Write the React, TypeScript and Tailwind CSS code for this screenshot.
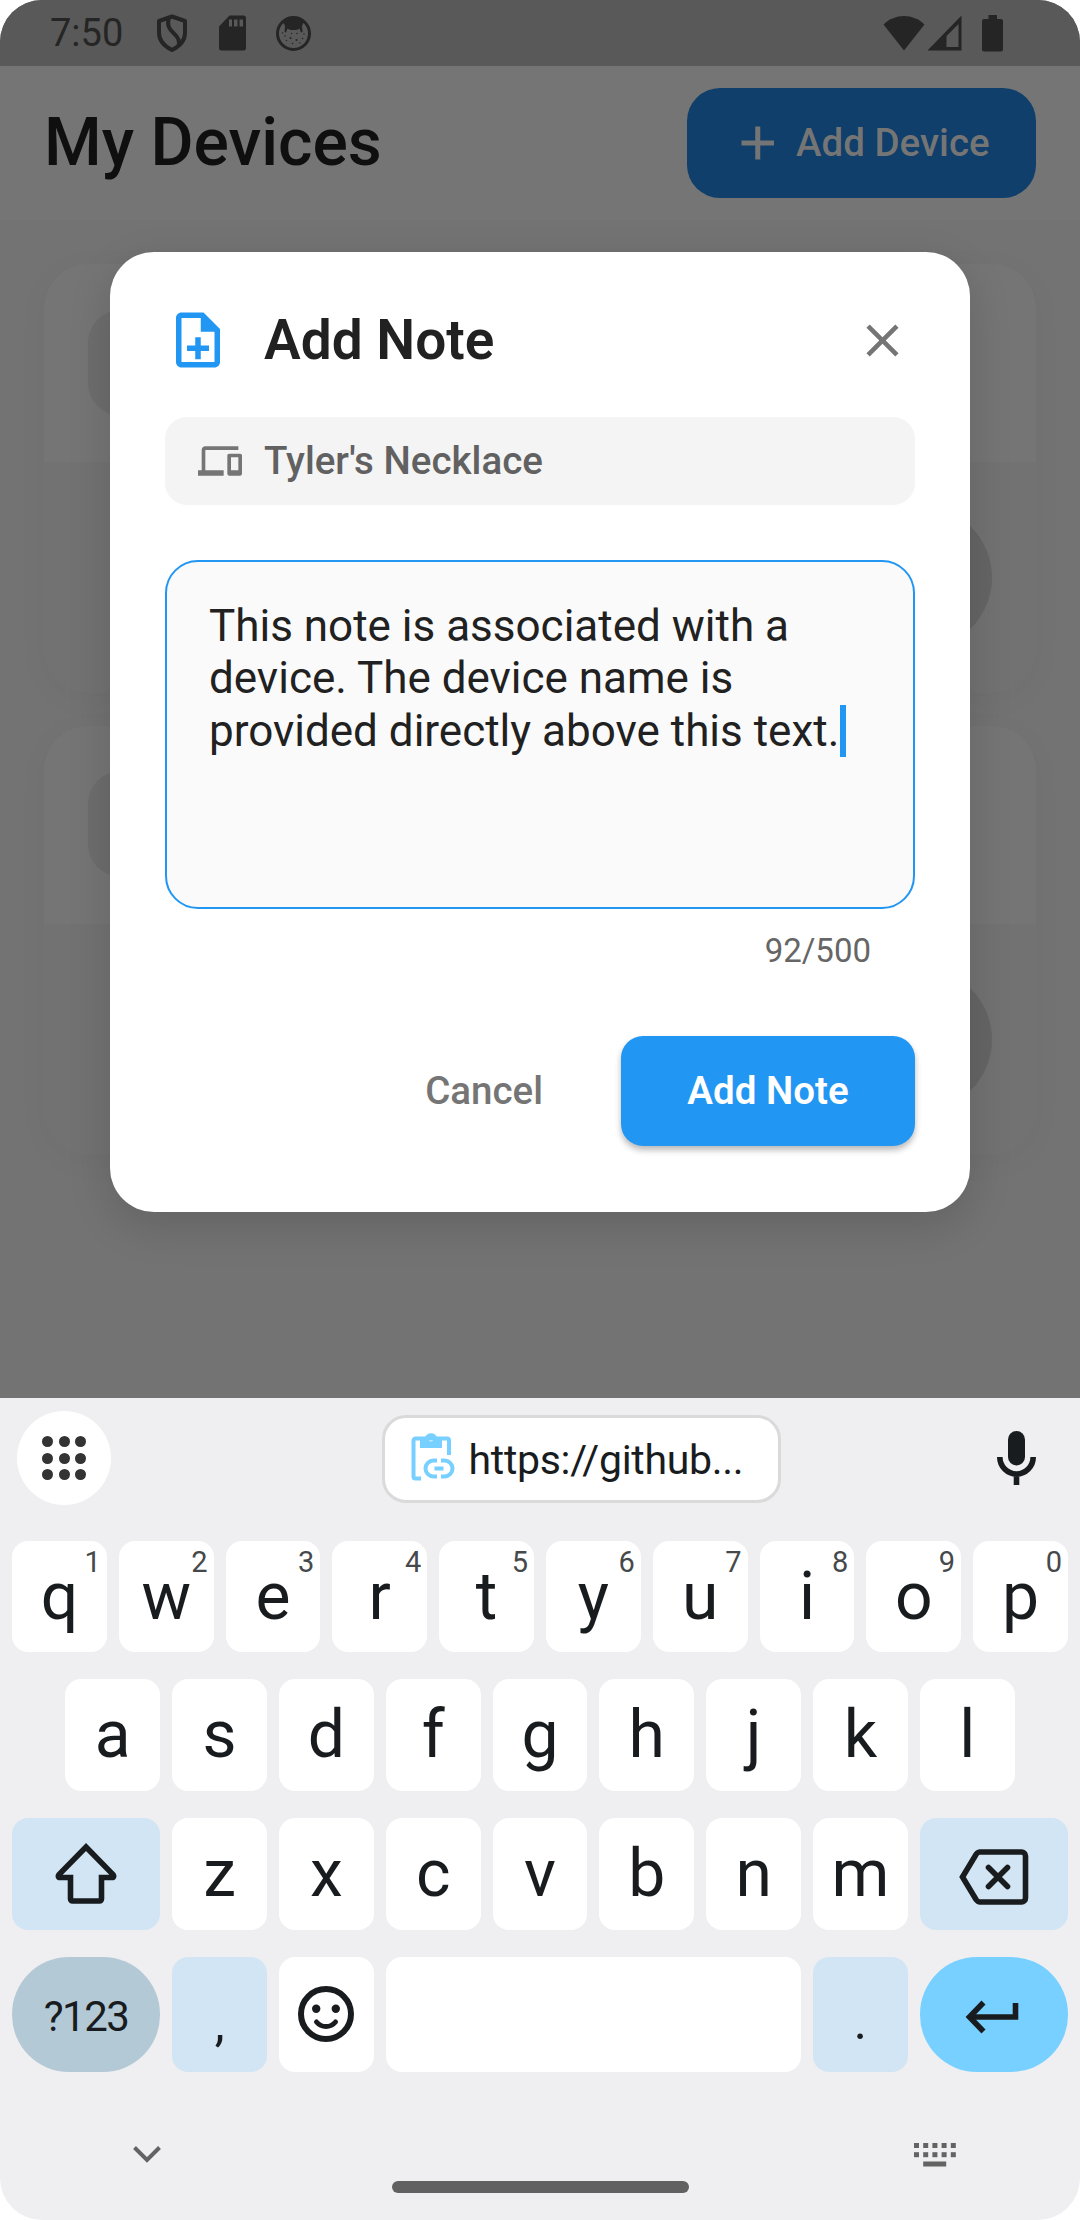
import type { ReactNode } from "react";

type IconProps = { className?: string };

function ShieldIcon() {
  return (
    <svg className="h-[38px] w-8" viewBox="0 0 32 38" fill="none" stroke="#252525" strokeWidth="4" strokeLinejoin="round">
      <path d="M16 2.5 29 7v12c0 7.500-5 13-13 17C8 32 3 26.500 3 19V7z" />
      <path d="M13 3.500C10.500 11 13 15 18 19.500c5 4.500 6 8 4.500 12.500" />
    </svg>
  );
}

function SdCardIcon() {
  return (
    <svg className="h-9 w-[27px]" viewBox="0 0 27 36">
      <path fill="#252525" d="M10.500.5H24.500A2.500 2.500 0 0 1 27 3v30a2.500 2.500 0 0 1-2.500 2.500h-22A2.500 2.500 0 0 1 0 33V11.500z" />
      <path fill="#595959" d="M10 4.500h3v7h-3zM15 4.500h3.500v7H15zM20.500 4.500H24v7h-3.500z" />
    </svg>
  );
}

function FaceIcon() {
  return (
    <svg className="size-[35px]" viewBox="0 0 35 35">
      <circle cx="17.500" cy="17.500" r="16" fill="none" stroke="#252525" strokeWidth="3" />
      <path fill="#252525" d="M7 6C12 1 23 1 28 6l-2 4 .500 6-1.500.500-1.500-4c-1.500 1-3 1.500-6 1.500s-4.500-.500-6-1.500l-1.500 4-1.500-.500.500-6z" />
      <g fill="#252525">
        <circle cx="9" cy="20" r=".8" /><circle cx="14.500" cy="22" r="1" /><circle cx="21" cy="17.500" r=".8" />
        <circle cx="20.500" cy="24" r="1" /><circle cx="26.500" cy="22.500" r=".8" /><circle cx="10.500" cy="24.500" r=".7" />
        <circle cx="16.500" cy="27.500" r=".8" /><circle cx="28" cy="18" r=".7" /><circle cx="15.500" cy="17.500" r=".7" />
        <circle cx="24" cy="27" r=".7" /><circle cx="6.500" cy="17" r=".7" />
      </g>
    </svg>
  );
}

function NoteAddIcon() {
  return (
    <svg className="size-[66px]" viewBox="0 0 24 24" fill="#2196f3">
      <path d="M13 11h-2v3H8v2h3v3h2v-3h3v-2h-3v-3zm1-9H6c-1.100 0-2 .9-2 2v16c0 1.100.89 2 1.990 2H18c1.100 0 2-.9 2-2V8l-6-6zm4 18H6V4h7v5h5v11z" />
    </svg>
  );
}

function DevicesIcon() {
  return (
    <svg className="size-11" viewBox="0 0 24 24" fill="#757575">
      <path d="M4 6h18V4H4c-1.100 0-2 .9-2 2v11H0v3h14v-3H4V6zm19 2h-6c-.55 0-1 .45-1 1v10c0 .55.45 1 1 1h6c.55 0 1-.45 1-1V9c0-.55-.45-1-1-1zm-1 9h-4v-7h4v7z" />
    </svg>
  );
}

function CloseIcon() {
  return (
    <svg className="size-[55px]" viewBox="0 0 24 24" fill="#757575">
      <path d="M19 6.410 17.590 5 12 10.590 6.410 5 5 6.410 10.590 12 5 17.590 6.410 19 12 13.410 17.590 19 19 17.590 13.410 12z" />
    </svg>
  );
}

function ClipboardLinkIcon() {
  return (
    <svg className="h-[50px] w-11" viewBox="0 0 44 50" fill="none" stroke="#77d0ff" strokeWidth="4">
      <path d="M10 46.500H4.500a2 2 0 0 1-2-2V8.500a2 2 0 0 1 2-2H36a2 2 0 0 1 2 2V23" />
      <path fill="#77d0ff" stroke="none" fillRule="evenodd" d="M9 16V6h5a6.200 6.200 0 0 1 12 0h5v10zM20 5a2.200 2.200 0 1 0 0 4.400A2.200 2.200 0 0 0 20 5z" />
      <path d="M26 28.500h-3.500a8 8 0 0 0 0 16H26M30 28.500h3.500a8 8 0 0 1 0 16H30M23.500 36.500h9" />
    </svg>
  );
}

function MicIcon() {
  return (
    <svg className="h-[54px] w-[39px]" viewBox="0 0 39 54">
      <rect x="11" y="0" width="17" height="34.500" rx="8.500" fill="#191c1e" />
      <path d="M2.800 26a16.700 17 0 0 0 33.400 0M19.500 43v11" fill="none" stroke="#191c1e" strokeWidth="5.600" />
    </svg>
  );
}

function ShiftIcon() {
  return (
    <svg className="relative top-[-1px] h-[62px] w-[62px]" viewBox="0 0 62 62" fill="none" stroke="#191c1e" strokeWidth="5.600">
      <path d="M31 5 58 32.500c1.200 1.500.700 3-1 3H46.500V57a2 2 0 0 1-2 2h-27a2 2 0 0 1-2-2V35.500H5c-1.700 0-2.200-1.500-1-3z" />
    </svg>
  );
}

function BackspaceIcon() {
  return (
    <svg className="relative top-[3px] h-14 w-[70px]" viewBox="0 0 70 56" fill="none" stroke="#191c1e" strokeWidth="5.600">
      <path d="M3.500 28 17 5.500C18.200 3.800 19 3 21 3h41.500a4 4 0 0 1 4 4v42a4 4 0 0 1-4 4H21c-2 0-2.800-.8-4-2.500z" />
      <path strokeLinecap="round" d="m29.500 18.500 19 19m0-19-19 19" />
    </svg>
  );
}

function SmileIcon() {
  return (
    <svg className="relative top-[-1px] size-14" viewBox="0 0 56 56">
      <circle cx="28" cy="28" r="25" fill="none" stroke="#191c1e" strokeWidth="6" />
      <circle cx="18.200" cy="22.700" r="4.200" fill="#191c1e" />
      <circle cx="37.800" cy="22.700" r="4.200" fill="#191c1e" />
      <path d="M18.500 36c5 6 14 6 19 0" fill="none" stroke="#191c1e" strokeWidth="5" strokeLinecap="round" />
    </svg>
  );
}

function EnterIcon() {
  return (
    <svg className="relative left-[-1.500px] top-[2px] h-[34px] w-[54px]" viewBox="0 0 54 34" fill="none" stroke="#191c1e" strokeWidth="5.600">
      <path d="M50.500 3v14H5" />
      <path d="M18.500 2.500 4.500 17l14 14.500" />
    </svg>
  );
}

function WifiIcon() {
  return (
    <svg className="h-9 w-[42px]" viewBox="0 0 42 36" fill="#252525">
      <path d="M.5 9.500C12-2 30-2 41.500 9.500L21 35.500z" />
    </svg>
  );
}

function SignalIcon() {
  return (
    <svg className="h-9 w-[35px]" viewBox="0 0 35 36">
      <path fill="#252525" fillRule="evenodd" d="M34.500.5v35H.5zM31.500 9v23h-12V21z" />
    </svg>
  );
}

function BatteryIcon() {
  return (
    <svg className="h-[37px] w-[21px]" viewBox="0 0 21 37" fill="#252525">
      <path d="M6.500 0h8.500v4h4a2 2 0 0 1 2 2v28.500a2 2 0 0 1-2 2H2a2 2 0 0 1-2-2V6a2 2 0 0 1 2-2h4.500z" />
    </svg>
  );
}

function StatusBar() {
  return (
    <div className="flex h-[66px] shrink-0 items-center bg-[#595959] pl-[50px] pr-[77px]">
      <span className="w-[106px] text-[38px] leading-[44px] text-[#252525]">7:50</span>
      <div className="flex items-center">
        <ShieldIcon />
        <div className="ml-[31px] flex"><SdCardIcon /></div>
        <div className="ml-[30px] flex"><FaceIcon /></div>
      </div>
      <div className="ml-auto flex items-center">
        <WifiIcon />
        <div className="ml-[2px] flex"><SignalIcon /></div>
        <div className="ml-5 flex"><BatteryIcon /></div>
      </div>
    </div>
  );
}

function DeviceCard({ className = "", top, icon, pad }: { className?: string; top: string; icon: string; pad: string }) {
  return (
    <div className={`flex flex-col overflow-hidden rounded-[44px] bg-[#727272] shadow-[0_6px_33px_rgba(0,0,0,0.035)] ${className}`}>
      <div className={`bg-[#757575] px-11 ${top}`}>
        <div className={`w-[106px] rounded-[33px] bg-[#6d6d6d] ${icon}`} />
      </div>
      <div className={`flex justify-end pr-11 ${pad}`}>
        <div className="size-[143px] rounded-full bg-[#656565]" />
      </div>
    </div>
  );
}

function DevicesPage() {
  return (
    <div className="flex h-full flex-col bg-[#737373]">
      <StatusBar />
      <header className="flex h-[154px] shrink-0 items-center justify-between bg-[#757575] px-11">
        <h1 className="text-[66px] font-medium leading-[78px] text-[#0f0f0f]">My Devices</h1>
        <button className="flex h-[110px] w-[349px] items-center rounded-[33px] bg-[#0f3f6a] pl-[49px] text-[38.5px] font-medium text-[#757575]">
          <svg className="mr-[17px] h-11 w-[43px]" viewBox="0 0 43 44" stroke="#757575" strokeWidth="5">
            <path d="M5.500 22h32.500M21.750 5.500v33" />
          </svg>
          Add Device
        </button>
      </header>
      <main className="flex flex-col gap-[33px] px-11 pt-11">
        <DeviceCard className="h-[429px]" top="h-[198px] pt-[46px]" icon="h-[106px]" pad="pt-11" />
        <DeviceCard className="h-[429px]" top="h-[198px] pt-[45px]" icon="h-[106px]" pad="pt-11" />
      </main>
    </div>
  );
}

function AddNoteDialog() {
  return (
    <section className="flex h-[960px] w-[860px] flex-col rounded-[44px] bg-white px-[55px] pt-[55px] shadow-[0_14px_44px_rgba(0,0,0,0.14)]">
      <div className="flex h-[66px] items-center">
        <NoteAddIcon />
        <h2 className="ml-[33px] text-[55px] font-semibold leading-[66px] text-[#212121]">Add Note</h2>
        <button className="ml-auto mr-[5px]"><CloseIcon /></button>
      </div>
      <div className="mt-11 flex h-[88px] items-center gap-[22px] rounded-[22px] bg-[#f4f4f4] px-[33px]">
        <DevicesIcon />
        <span className="text-[38.5px] font-medium leading-[46px] text-[#616161]">Tyler's Necklace</span>
      </div>
      <div className="mt-[55px] h-[349px] rounded-[33px] border-[2.75px] border-[#2196f3] bg-[#fafafa] pl-[42px] pt-[38px] text-[44px] leading-[52.4px] text-[#212121]">
        <p className="whitespace-nowrap">This note is associated with a</p>
        <p className="whitespace-nowrap">device. The device name is</p>
        <p className="flex items-center whitespace-nowrap">
          provided directly above this text.
          <span className="ml-px h-[52px] w-[6px] bg-[#2196f3]" />
        </p>
      </div>
      <div className="mt-[22px] pr-11 text-right text-[33px] leading-[39px] text-[#666666]">92/500</div>
      <div className="mt-[66px] flex items-center justify-end">
        <button className="mr-[78px] text-[38.5px] font-medium text-[#757575]">Cancel</button>
        <button className="h-[110px] w-[294px] rounded-[22px] bg-[#2196f3] text-[38.5px] font-semibold text-white shadow-[0_4px_6px_rgba(0,0,0,0.28)]">
          Add Note
        </button>
      </div>
    </section>
  );
}

function Key({ children, hint, className = "bg-white" }: { children?: ReactNode; hint?: string; className?: string }) {
  return (
    <div className={`relative flex h-full w-[94.8px] shrink-0 items-center justify-center rounded-2xl text-[66px] leading-[78px] text-[#191c1e] ${className}`}>
      {children}
      {hint && <span className="absolute right-[6px] top-[3px] text-[29px] leading-[36px] text-[#46494b] font-[450]">{hint}</span>}
    </div>
  );
}

const topRow = ["q", "w", "e", "r", "t", "y", "u", "i", "o", "p"];
const homeRow = ["a", "s", "d", "f", "g", "h", "j", "k", "l"];
const bottomRow = ["z", "x", "c", "v", "b", "n", "m"];

function SuggestionBar() {
  return (
    <div className="flex h-[143px] items-start justify-between pl-[17px] pr-[44px]">
      <div className="mt-[13px] flex size-[94px] items-center justify-center rounded-full bg-white">
        <div className="grid grid-cols-3 gap-[5.5px]">
          {topRow.slice(0, 9).map((k) => (
            <span key={k} className="size-[11px] rounded-full bg-[#333333]" />
          ))}
        </div>
      </div>
      <div className="ml-[54px] mt-[17px] flex h-[88px] w-[399px] items-center rounded-3xl border-[3px] border-[#dadada] bg-white pl-[26px] text-[41px] font-[450] tracking-[-0.3px] text-[#191c1e]">
        <div className="flex pb-1"><ClipboardLinkIcon /></div>
        <span className="ml-[14px] mt-[3px]">https://github...</span>
      </div>
      <div className="mt-[33px]"><MicIcon /></div>
    </div>
  );
}

function Keyboard() {
  return (
    <div className="flex h-[822px] flex-col bg-[#efeff1] text-[#191c1e]">
      <SuggestionBar />
      <div className="flex flex-col gap-[27px] px-3">
        <div className="flex h-[111px] gap-3">
          {topRow.map((k, i) => (
            <Key key={k} hint={String((i + 1) % 10)}>{k}</Key>
          ))}
        </div>
        <div className="flex h-[112px] justify-center gap-3">
          {homeRow.map((k) => (
            <Key key={k}>{k}</Key>
          ))}
        </div>
        <div className="flex h-[112px] justify-between gap-3">
          <Key className="flex-1 bg-[#d2e5f4]"><ShiftIcon /></Key>
          {bottomRow.map((k) => (
            <Key key={k}>{k}</Key>
          ))}
          <Key className="flex-1 bg-[#d2e5f4]"><BackspaceIcon /></Key>
        </div>
        <div className="flex h-[115px] gap-3">
          <div className="flex w-[148.200px] shrink-0 items-center justify-center rounded-[57px] bg-[#b4c9d6] pt-1 text-[42px] font-[450] tracking-[-1.500px]">
            ?123
          </div>
          <Key className="bg-[#d2e5f4]"><span className="pt-4 text-[50px]">,</span></Key>
          <Key><SmileIcon /></Key>
          <div className="flex-1 rounded-2xl bg-white" />
          <Key className="bg-[#d2e5f4]"><span className="pt-[14px] text-[50px]">.</span></Key>
          <div className="flex w-[148.200px] shrink-0 items-center justify-center rounded-[57px] bg-[#77d0ff]">
            <EnterIcon />
          </div>
        </div>
      </div>
      <div className="mt-[71px] flex items-start justify-between pl-[133px] pr-[124px]">
        <svg className="mt-[3px] h-[17px] w-7" viewBox="0 0 28 17" fill="none" stroke="#636363" strokeWidth="4">
          <path d="m1.500 1.500 12.500 12.500 12.500-12.500" />
        </svg>
        <svg className="h-6 w-[42px]" viewBox="0 0 42 24" fill="#636363">
          {[0, 9.200, 18.400, 27.600, 36.800].map((x) => (
            <g key={x}>
              <rect x={x} y="0" width="5" height="5" />
              <rect x={x} y="9.200" width="5" height="5" />
            </g>
          ))}
          <rect x="9.200" y="18.500" width="23" height="5" />
        </svg>
      </div>
      <div className="mx-auto mt-[14px] h-3 w-[297px] rounded-full bg-[#616161]" />
    </div>
  );
}

export default function App() {
  return (
    <div className="h-[2220px] w-[1080px] bg-white font-['Roboto',sans-serif]">
      <div className="h-full overflow-hidden rounded-[42px]">
        <div className="relative h-[1398px] overflow-hidden">
          <DevicesPage />
          <div className="absolute inset-0 flex justify-center pt-[252px]">
            <AddNoteDialog />
          </div>
        </div>
        <Keyboard />
      </div>
    </div>
  );
}
